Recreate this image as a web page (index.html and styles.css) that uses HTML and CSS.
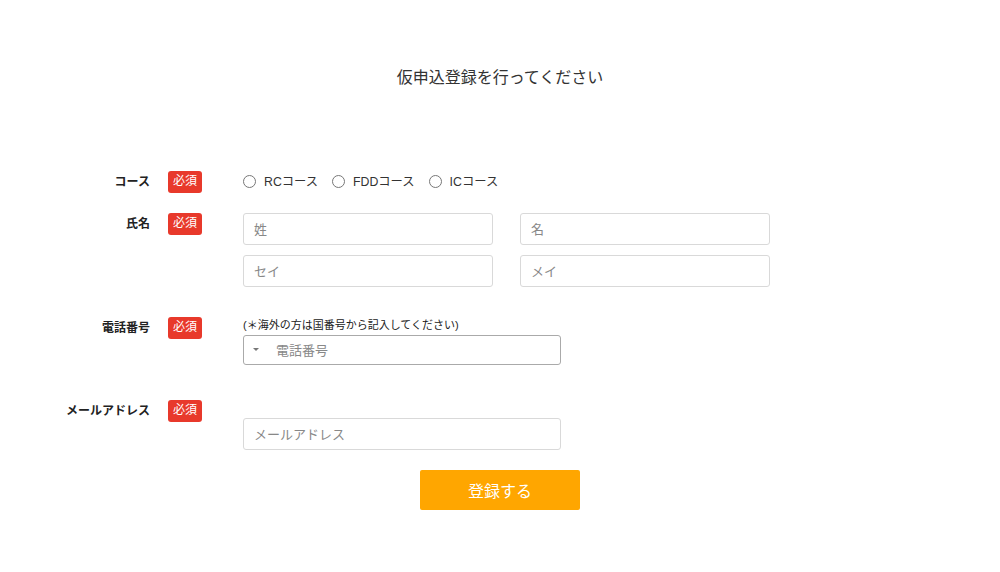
FILE: index.html
```html
<!DOCTYPE html>
<html lang="ja">
<head>
<meta charset="utf-8">
<link rel="stylesheet" href="styles.css">
</head>
<body>
<div class="page">
  <h1 class="title">仮申込登録を行ってください</h1>
  <form class="form">
    <div class="row row-course">
      <div class="head"><span class="label">コース</span><span class="badge">必須</span></div>
      <div class="field radios">
        <label class="radio"><span class="circle"></span>RCコース</label>
        <label class="radio"><span class="circle"></span>FDDコース</label>
        <label class="radio"><span class="circle"></span>ICコース</label>
      </div>
    </div>
    <div class="row row-name">
      <div class="head"><span class="label">氏名</span><span class="badge">必須</span></div>
      <div class="field name-grid">
        <div class="input">姓</div>
        <div class="input">名</div>
        <div class="input">セイ</div>
        <div class="input">メイ</div>
      </div>
    </div>
    <div class="row row-phone">
      <div class="head"><span class="label">電話番号</span><span class="badge">必須</span></div>
      <div class="field">
        <div class="note">(＊海外の方は国番号から記入してください)</div>
        <div class="input wide phone"><span class="caret"></span><span>電話番号</span></div>
      </div>
    </div>
    <div class="row row-mail">
      <div class="head"><span class="label">メールアドレス</span><span class="badge">必須</span></div>
      <div class="field">
        <div class="note"></div>
        <div class="input wide">メールアドレス</div>
      </div>
    </div>
    <div class="actions">
      <button type="button" class="submit">登録する</button>
    </div>
  </form>
</div>
</body>
</html>
```

FILE: styles.css
```css
* { box-sizing: border-box; }
html, body { margin: 0; padding: 0; background: #fff; }
body {
  font-family: "Liberation Sans", Arial, "Noto Sans CJK JP", sans-serif;
  color: #333;
}
.page { width: 1000px; padding-top: 66px; }
.title {
  margin: 0;
  text-align: center;
  font-size: 16px;
  font-weight: normal;
  line-height: 24px;
  color: #333;
}
.form { margin-top: 81px; display: flex; flex-direction: column; }
.row { display: flex; align-items: flex-start; }
.head { display: flex; align-items: center; height: 22px; }
.label {
  width: 150px;
  text-align: right;
  font-size: 12px;
  line-height: 16px;
  padding-bottom: 1px;
  font-weight: bold;
  color: #222;
}
.badge {
  margin-left: 18px;
  width: 34px;
  height: 22px;
  line-height: 21px;
  border-radius: 3px;
  background: #e8392b;
  color: #fff;
  font-size: 12px;
  text-align: center;
}
.field { margin-left: 41px; }
.radios { display: flex; align-items: center; height: 20px; gap: 14px; font-size: 12.3px; color: #333; }
.radio { display: flex; align-items: center; gap: 8px; }
.circle {
  width: 13px; height: 13px;
  border: 1px solid #777;
  border-radius: 50%;
  background: #fff;
}
.row-name { margin-top: 20px; }
.name-grid { display: grid; grid-template-columns: 250px 250px; column-gap: 27px; row-gap: 10px; }
.input {
  height: 32px;
  border: 1px solid #d9d9d9;
  border-radius: 3px;
  padding-left: 10px;
  padding-bottom: 2px;
  display: flex;
  align-items: center;
  font-size: 13px;
  color: #888;
  background: #fff;
}
.input.wide { width: 318px; }
.row-phone { margin-top: 30px; }
.note { height: 18px; font-size: 11px; line-height: 16px; color: #222; }
.phone { height: 30px; border-color: #aaa; padding-left: 9px; }
.caret {
  width: 0; height: 0;
  border-left: 3px solid transparent;
  border-right: 3px solid transparent;
  border-top: 3px solid #777;
  margin-right: 17px;
}
.row-mail { margin-top: 35px; }
.actions { display: flex; justify-content: center; margin-top: 20px; }
.submit {
  width: 160px;
  height: 40px;
  border: none;
  border-radius: 2px;
  background: #ffa600;
  color: #fff;
  font-family: inherit;
  font-size: 16px;
  padding-bottom: 2px;
}
```
